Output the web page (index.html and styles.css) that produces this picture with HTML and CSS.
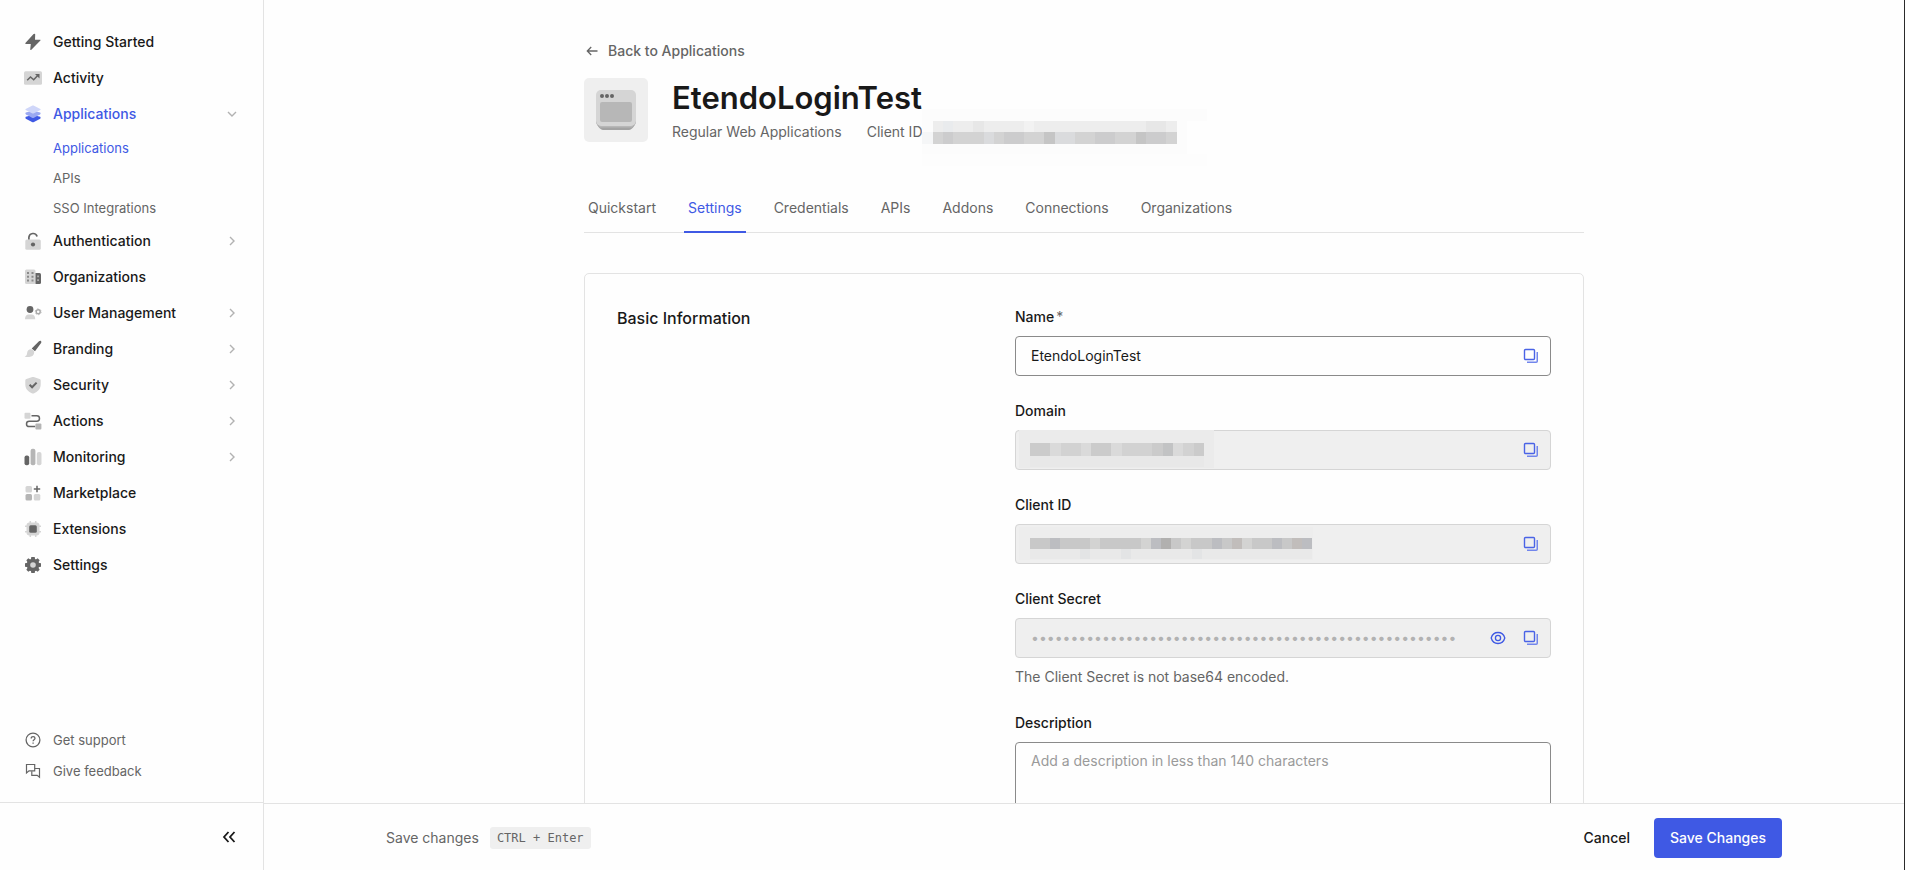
FILE: index.html
```html
<!DOCTYPE html>
<html lang="en">
<head>
<meta charset="utf-8">
<title>EtendoLoginTest - Settings</title>
<link rel="stylesheet" href="styles.css">
</head>
<body>
<svg class="defs" aria-hidden="true">
  <symbol id="chevron" viewBox="0 0 12 12"><path d="M4 2l4 4-4 4" fill="none" stroke="#b2b2b2" stroke-width="1.4"/></symbol>
  <symbol id="copy" viewBox="0 0 16 16"><path d="M2.5 1.5h8a1 1 0 0 1 1 1v8a1 1 0 0 1-1 1h-8a1 1 0 0 1-1-1v-8a1 1 0 0 1 1-1z" fill="none" stroke="#4a63e6" stroke-width="1.400"/><path d="M14.250 4v9.250a1 1 0 0 1-1 1H4" fill="none" stroke="#7286ec" stroke-width="1.5"/></symbol>
</svg>
<div class="app">
  <aside class="sidebar">
    <nav class="nav">
      <a class="item" href="#"><svg class="icon" viewBox="0 0 18 18"><path d="M9.6.9 1.4 10c-.3.4-.1.9.4.9h5l-.6 5.700c0 .5.500.700.9.300l9.300-9.300c.300-.4.1-.9-.4-.9h-5l.2-5.400c0-.6-.8-.9-1.200-.4z" fill="#656565"/></svg><span>Getting Started</span></a>
      <a class="item" href="#"><svg class="icon" viewBox="0 0 18 18"><rect y="2.300" width="18" height="13.400" rx="1.500" fill="#d5d5d5"/><path d="M3.200 11.200 6.500 8l3.200 2.800 4-4.300" fill="none" stroke="#656565" stroke-width="1.500"/><path d="M11 5h4.500v4.500z" fill="#656565"/></svg><span>Activity</span></a>
      <a class="item active" href="#"><svg class="icon" viewBox="0 0 18 18"><path d="m1.800 11.800 4-1h6.400l4 1c.5.400.5 1.500 0 1.900L10 17.100c-.6.300-1.400.3-2 0l-6.200-3.400c-.5-.4-.5-1.500 0-1.900z" fill="#3f59e4"/><path d="m1.800 7.400 4-1h6.400l4 1c.5.400.5 1.500 0 1.900L10 12.800c-.6.300-1.400.3-2 0L1.800 9.300c-.5-.4-.5-1.500 0-1.900z" fill="#9aa8f1"/><path d="M8 .7c.6-.3 1.400-.3 2 0l6.300 3.200c.4.300.4.900 0 1.200L10 8.300c-.6.300-1.400.3-2 0L1.700 5.100c-.4-.3-.4-.9 0-1.200z" fill="#cfd6f9"/></svg><span>Applications</span><svg class="chev down"><use href="#chevron"/></svg></a>
      <div class="sub">
        <a class="subitem active" href="#">Applications</a>
        <a class="subitem" href="#">APIs</a>
        <a class="subitem" href="#">SSO Integrations</a>
      </div>
      <a class="item" href="#"><svg class="icon" viewBox="0 0 18 18"><rect x="1.300" y="7.500" width="15.500" height="10.200" rx="1.500" fill="#d5d5d5"/><path d="M4.900 7.500V5.200a4.200 4.200 0 0 1 8.200-.7" fill="none" stroke="#656565" stroke-width="1.700"/><circle cx="9" cy="12.500" r="2.100" fill="#656565"/></svg><span>Authentication</span><svg class="chev"><use href="#chevron"/></svg></a>
      <a class="item" href="#"><svg class="icon" viewBox="0 0 18 18"><rect x="1" y="1.500" width="10.500" height="14.500" rx="1.500" fill="#d5d5d5"/><path d="M3 4h2v2H3zm4.500 0h2v2h-2zM3 7.800h2v2H3zm4.500 0h2v2h-2zM3 11.600h2v2H3zm4.500 0h2v2h-2z" fill="#8a8a8a"/><path d="M11.500 5h4a1.500 1.500 0 0 1 1.500 1.500v8a1.500 1.500 0 0 1-1.500 1.500h-4z" fill="#656565"/><path d="M13.300 7.500h1.500v1.700h-1.500zm0 3.800h1.500V13h-1.500z" fill="#bcbcbc"/></svg><span>Organizations</span></a>
      <a class="item" href="#"><svg class="icon" viewBox="0 0 18 18"><circle cx="6" cy="5.500" r="3.400" fill="#656565"/><path d="M1 15.200c0-2.800 1.400-4.700 3.500-4.700h3.200c2.200 0 3.500 1.900 3.500 4.700z" fill="#d5d5d5"/><circle cx="14.200" cy="7.800" r="2" fill="none" stroke="#a8a8a8" stroke-width="1.400"/><circle cx="14.200" cy="7.800" r="2.900" fill="none" stroke="#b5b5b5" stroke-width="1" stroke-dasharray="1.500 1.540"/></svg><span>User Management</span><svg class="chev"><use href="#chevron"/></svg></a>
      <a class="item" href="#"><svg class="icon" viewBox="0 0 18 18"><path d="M16.900 1c.6.500.6 1.200.2 1.900L11 11.300 7.700 8.600 15 1.300c.6-.5 1.300-.7 1.900-.3z" fill="#656565"/><path d="M6.800 9.200c1.900 0 3.500 1.600 3.400 3.300-.1 2.600-2.200 4.400-5 4.500-2 .1-3.600-.2-4.600-.6 1.600-.4 2.300-1.200 2.500-3.500.2-2.200 1.700-3.700 3.700-3.700z" fill="#d5d5d5"/></svg><span>Branding</span><svg class="chev"><use href="#chevron"/></svg></a>
      <a class="item" href="#"><svg class="icon" viewBox="0 0 18 18"><path d="M8.300 1.100c.5-.2.900-.2 1.400 0l5.900 1.800c.7.200 1.100.7 1.100 1.400v4.200c0 4.500-3 7.400-7 8.900-.5.200-.9.200-1.400 0-4-1.500-7-4.400-7-8.900V4.300c0-.7.4-1.200 1.100-1.400z" fill="#d5d5d5"/><path d="m5.600 8.800 2.500 2.500 4.500-4.700" fill="none" stroke="#656565" stroke-width="2"/></svg><span>Security</span><svg class="chev"><use href="#chevron"/></svg></a>
      <a class="item" href="#"><svg class="icon" viewBox="0 0 18 18"><path d="M7.500 3.800h5.300a2.700 2.700 0 0 1 0 5.400H5.200a2.700 2.700 0 0 0 0 5.400h6" fill="none" stroke="#656565" stroke-width="1.500"/><rect x=".5" y=".8" width="6" height="6" rx="1" fill="#d5d5d5"/><rect x="11.400" y="11.500" width="6" height="6" rx="1" fill="#b5b5b5"/></svg><span>Actions</span><svg class="chev"><use href="#chevron"/></svg></a>
      <a class="item" href="#"><svg class="icon" viewBox="0 0 18 18"><rect x=".500" y="7.500" width="4.700" height="9.700" rx="2" fill="#656565"/><rect x="6.600" y=".8" width="4.800" height="16.400" rx="2" fill="#b5b5b5"/><rect x="12.800" y="4" width="4.700" height="13.200" rx="2" fill="#d5d5d5"/></svg><span>Monitoring</span><svg class="chev"><use href="#chevron"/></svg></a>
      <a class="item" href="#"><svg class="icon" viewBox="0 0 18 18"><rect x="1.500" y="2" width="6.500" height="6.500" rx="1.500" fill="#d5d5d5"/><rect x="1.500" y="10" width="6.500" height="6.500" rx="1.500" fill="#b5b5b5"/><rect x="9.800" y="10" width="6.500" height="6.500" rx="1.500" fill="#d5d5d5"/><path d="M13 1.800v6.400M9.800 5h6.400" stroke="#656565" stroke-width="1.500"/></svg><span>Marketplace</span></a>
      <a class="item" href="#"><svg class="icon" viewBox="0 0 18 18"><rect x="2.500" y="2.500" width="13" height="13" rx="3" fill="#d5d5d5"/><path d="M6.300 1v16m5.400-16v16M1 6.300h16M1 11.700h16" stroke="#d5d5d5" stroke-width="1.500"/><rect x="5.200" y="5.200" width="7.600" height="7.600" rx="1.500" fill="#656565"/></svg><span>Extensions</span></a>
      <a class="item" href="#"><svg class="icon" viewBox="0 0 18 18"><g fill="#656565"><circle cx="9" cy="9" r="6.300"/><path d="M7.300 1h3.400l.5 3H6.800zM7.300 17h3.400l.5-3H6.800zM1 7.300v3.400l3 .5V6.800zM17 7.300v3.400l-3 .5V6.800z"/><path transform="rotate(45 9 9)" d="M7.600 1h2.800l.6 3H7zM7.600 17h2.800l.6-3H7zM1 7.600v2.800l3 .6V7zM17 7.600v2.800l-3 .6V7z"/></g><circle cx="9" cy="9" r="2.800" fill="#d5d5d5"/></svg><span>Settings</span></a>
    </nav>
    <div class="help">
      <a class="helpitem" href="#"><svg class="icon" viewBox="0 0 18 18" fill="none" stroke="#656565" stroke-width="1.300"><circle cx="9" cy="9" r="6.900"/><path d="M7.200 7.400c0-1.100.8-1.800 1.900-1.800s1.900.7 1.900 1.700c0 1.400-1.900 1.400-1.900 2.900"/><path d="M9.100 11.400v1.300"/></svg><span>Get support</span></a>
      <a class="helpitem" href="#"><svg class="icon" viewBox="0 0 18 18" fill="none" stroke="#656565" stroke-width="1.200"><path d="M2.500 11V2.500h8.200v6.300H5z"/><path d="M10.700 6.500h4.800v8.700l-2.300-1.900H7.800v-4"/></svg><span>Give feedback</span></a>
    </div>
    <div class="collapse"><button type="button" aria-label="Collapse sidebar"><svg width="14" height="12" viewBox="0 0 14 12"><path d="M6.500 1 2 6l4.500 5M12.500 1 8 6l4.500 5" fill="none" stroke="#191919" stroke-width="1.800"/></svg></button></div>
  </aside>

  <div class="page">
    <main class="scroll">
      <div class="content">
        <a class="back" href="#"><svg width="12" height="12" viewBox="0 0 12 12"><path d="M11.500 6H1.500M5.200 2 1.300 6l3.900 4" fill="none" stroke="#656565" stroke-width="1.300"/></svg>Back to Applications</a>
        <header class="head">
          <svg class="appicon" viewBox="0 0 64 64"><rect width="64" height="64" rx="5" fill="#efefef"/><path d="M12 42h40v2c0 2-4 8-7 8H19c-3 0-7-6-7-8z" fill="#a3a3a3"/><path d="M12 40h40c0 4-2 7-4 9.500H16C14 47 12 44 12 40z" fill="#b7b7b7"/><rect x="12" y="12" width="40" height="36" rx="5" fill="#d5d5d5"/><rect x="16" y="24" width="32" height="20" rx="2" fill="#b7b7b7"/><g fill="#656565"><circle cx="18" cy="18" r="2"/><circle cx="23" cy="18" r="2"/><circle cx="28" cy="18" r="2"/></g></svg>
          <div>
            <h1>EtendoLoginTest</h1>
            <div class="meta"><span>Regular Web Applications</span><span class="cid">Client ID<svg class="mosaic-id" width="285" height="57" shape-rendering="crispEdges"><path fill="#fcfcfc" d="M0 0h285v12h-20v33H0z"/><path fill="#fdfdfd" d="M0 45h285v12H0z"/><path fill="#f5f6f7" d="M0 23h11v12H0z"/><g transform="translate(11 12)"><path fill="#ededed" d="M0 0h244v11H0z"/><path fill="#e7e7e7" d="M40 0h11v11H40zM213 0h20v11h-20z"/><path fill="#f2f2f2" d="M91 0h10v11H91z"/><path fill="#e9ebed" d="M10 0h10v11H10z"/><path fill="#d3d3d3" d="M0 11h244v12H0z"/><path fill="#cccccd" d="M10 11h10v12H10zM71 11h20v12H71zM162 11h20v12h-20zM213 11h20v12h-20z"/><path fill="#c5c5c5" d="M111 11h11v12h-11zM203 11h10v12h-10z"/><path fill="#dadbdd" d="M51 11h10v12H51zM122 11h20v12h-20z"/></g></svg></span></div>
          </div>
        </header>
        <nav class="tabs">
          <a href="#">Quickstart</a><a class="on" href="#">Settings</a><a href="#">Credentials</a><a href="#">APIs</a><a href="#">Addons</a><a href="#">Connections</a><a href="#">Organizations</a>
        </nav>
        <section class="card">
          <h2>Basic Information</h2>
          <form class="fields">
            <div class="field">
              <label for="name">Name<span class="req">*</span></label>
              <div class="box"><input id="name" type="text" value="EtendoLoginTest"><button type="button" aria-label="Copy name"><svg><use href="#copy"/></svg></button></div>
            </div>
            <div class="field">
              <label for="domain">Domain</label>
              <div class="box ro"><input id="domain" type="text" readonly><svg class="mosaic" width="198" height="40" shape-rendering="crispEdges"><path fill="#ebebeb" d="M3 0h195v38H3z"/><g transform="translate(14 13)"><path fill="#d2d2d2" d="M0 0h174v13H0z"/><path fill="#cbcbcb" d="M0 0h20v13H0zM61 0h20v13H61zM122 0h11v13h-11zM164 0h10v13h-10z"/><path fill="#dadada" d="M20 0h11v13H20zM51 0h10v13H51zM81 0h11v13H81zM143 0h10v13h-10z"/><path fill="#c2c3c4" d="M133 0h10v13h-10z"/><path fill="#e8e8e8" d="M0 13h174v11H0z"/></g></svg><button type="button" aria-label="Copy domain"><svg><use href="#copy"/></svg></button></div>
            </div>
            <div class="field">
              <label for="cid">Client ID</label>
              <div class="box ro"><input id="cid" type="text" readonly><svg class="mosaic" width="298" height="40" shape-rendering="crispEdges"><path fill="#ededed" d="M3 3h294v33H3z"/><g transform="translate(14 14)"><path fill="#c8c8c8" d="M0 0h282v11H0z"/><path fill="#bcbdc1" d="M20 0h10v11H20zM121 0h10v11h-10zM182 0h10v11h-10zM242 0h10v11h-10zM272 0h10v11h-10z"/><path fill="#b1b0af" d="M131 0h10v11h-10z"/><path fill="#d3d3d2" d="M60 0h10v11H60zM111 0h10v11h-10zM151 0h10v11h-10zM212 0h10v11h-10z"/><path fill="#c1bdbb" d="M202 0h10v11h-10zM262 0h10v11h-10z"/><path fill="#e9e9e9" d="M0 11h282v10H0z"/><path fill="#e3e4e5" d="M50 11h10v10H50zM91 11h10v10H91zM162 11h10v10h-10z"/></g></svg><button type="button" aria-label="Copy client ID"><svg><use href="#copy"/></svg></button></div>
            </div>
            <div class="field">
              <label for="secret">Client Secret</label>
              <div class="box ro"><input id="secret" type="text" readonly value="••••••••••••••••••••••••••••••••••••••••••••••••••••••"><button type="button" aria-label="Show secret"><svg viewBox="0 0 16 16" fill="none" stroke="#3f59e4" stroke-width="1.300"><path d="M1.200 8c1-3.500 3.600-5.500 6.800-5.500s5.800 2 6.800 5.500c-1 3.500-3.600 5.500-6.800 5.500S2.200 11.500 1.200 8z"/><circle cx="8" cy="8" r="2.600"/></svg></button><button type="button" aria-label="Copy client secret"><svg><use href="#copy"/></svg></button></div>
              <p class="hint">The Client Secret is not base64 encoded.</p>
            </div>
            <div class="field">
              <label for="desc">Description</label>
              <textarea id="desc" rows="4" placeholder="Add a description in less than 140 characters"></textarea>
            </div>
          </form>
        </section>
      </div>
    </main>
    <footer class="savebar">
      <span>Save changes</span><kbd>CTRL + Enter</kbd>
      <button class="cancel" type="button">Cancel</button>
      <button class="save" type="button">Save Changes</button>
    </footer>
  </div>
</div>
</body>
</html>
```
FILE: styles.css
```css
* { box-sizing: border-box; }
body { margin: 0; background: #fefefe; color: #191919; font: 14px/22px Inter, "Liberation Sans", sans-serif; }
a { color: inherit; text-decoration: none; }
button { font: inherit; color: inherit; background: none; border: 0; padding: 0; cursor: pointer; }
h1, h2, p { margin: 0; }
.defs { display: none; }
.app { display: flex; height: 100vh; border-right: 1px solid #2a2a2a; }

.sidebar { flex: 0 0 264px; display: flex; flex-direction: column; border-right: 1px solid #e3e3e3; }
.nav { flex: 1; min-height: 0; overflow: hidden; padding: 24px 24px 0; }
.item { display: flex; align-items: center; height: 36px; gap: 11px; font-weight: 500; }
.item span { flex: 1; }
.icon { width: 18px; height: 18px; flex: none; }
.chev { width: 12px; height: 12px; margin-right: 1px; }
.down { transform: rotate(90deg); }
.active { color: #3f59e4; }
.sub { display: flex; flex-direction: column; padding: 1px 0 0 29px; }
.subitem { font-size: 13px; height: 30px; line-height: 30px; color: #656565; }
.subitem.active { color: #3f59e4; }
.help { padding: 0 24px 16px; color: #656565; font-size: 13px; }
.helpitem { display: flex; align-items: center; height: 31px; gap: 11px; }
.collapse { height: 68px; flex: none; border-top: 1px solid #e3e3e3; display: flex; align-items: center; justify-content: flex-end; padding-right: 27px; }
.collapse svg { display: block; }

.page { flex: 1; min-width: 0; display: flex; flex-direction: column; }
.scroll { flex: 1; min-height: 0; overflow: hidden; }
.content { max-width: 1000px; margin: 0 auto; padding-top: 40px; }
.back { display: flex; align-items: center; gap: 10px; padding-left: 2px; color: #656565; font-weight: 500; }
.head { display: flex; gap: 24px; margin-top: 16px; }
.appicon { width: 64px; height: 64px; flex: none; }
h1 { font-size: 31px; line-height: 40px; font-weight: 600; }
.meta { display: flex; gap: 25px; margin-top: 3px; color: #656565; }
.cid { position: relative; }
.mosaic-id { position: absolute; left: 55px; top: -12px; }
.tabs { display: flex; gap: 24px; margin-top: 42px; border-bottom: 1px solid #e3e3e3; color: #656565; }
.tabs a { padding: 12px 4px; height: 48px; margin-bottom: -1px; }
.tabs .on { color: #3f59e4; border-bottom: 2px solid #3f59e4; }

.card { display: grid; grid-template-columns: 398fr 536fr; margin-top: 40px; padding: 32px 32px; border: 1px solid #e3e3e3; border-radius: 5px; }
h2 { font-size: 16px; line-height: 24px; font-weight: 500; }
.fields { display: flex; flex-direction: column; gap: 24px; }
.field { display: flex; flex-direction: column; gap: 8px; }
label { font-weight: 500; }
.req { margin-left: 2px; color: #656565; font-weight: 400; }
.box { position: relative; display: flex; align-items: center; gap: 17px; height: 40px; padding: 0 11px 0 15px; border: 1px solid #8a8a8a; border-radius: 4px; }
.box input { flex: 1; min-width: 0; border: 0; padding: 0; background: none; outline: 0; font: inherit; color: #191919; }
.box button, .box button svg { display: block; width: 16px; height: 16px; }
.ro { background: #efefef; border-color: #d5d5d5; }
.box.ro input { color: #b2b2b2; }
.mosaic { position: absolute; left: 0; top: -1px; }
.hint { color: #656565; }
textarea { display: block; width: 100%; height: 96px; padding: 7px 15px; border: 1px solid #8a8a8a; border-radius: 4px; background: none; font: inherit; resize: none; }
textarea::placeholder { color: #9a9a9a; }

.savebar { flex: none; height: 67px; display: flex; align-items: center; padding: 2px 122px 0; border-top: 1px solid #e3e3e3; background: #fefefe; color: #656565; }
kbd { margin: 0 auto 0 11px; padding: 0 7px; border-radius: 3px; background: #efefef; font: 12px/22px "DejaVu Sans Mono", monospace; }
.cancel { color: #191919; font-weight: 500; margin-right: 24px; }
.save { height: 40px; padding: 0 16px; border-radius: 4px; background: #3f59e4; color: #fefefe; font-weight: 500; }
```
